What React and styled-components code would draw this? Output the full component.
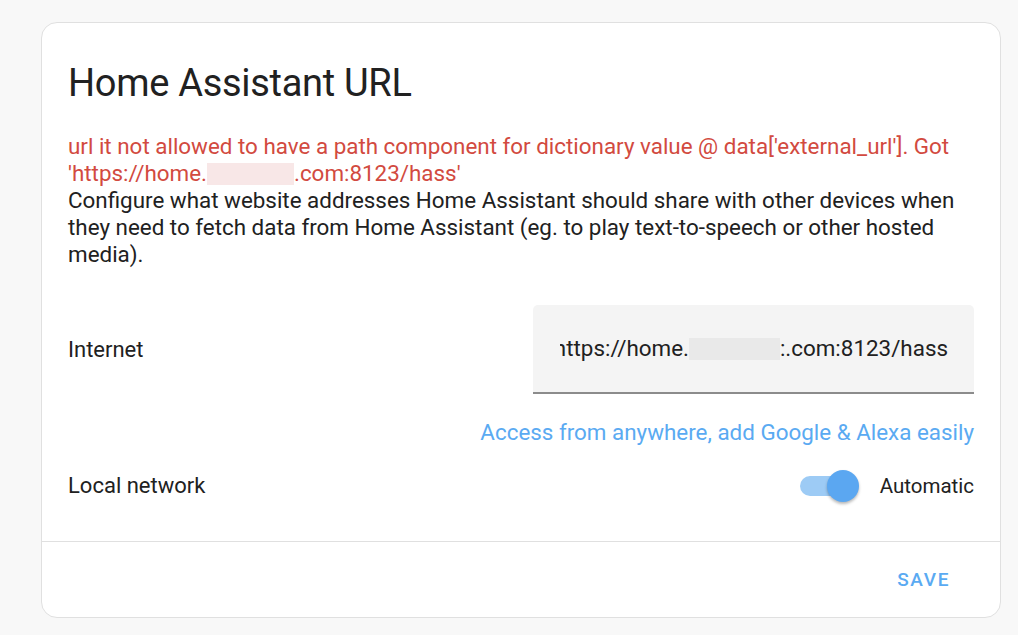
import React from "react";
import styled, { createGlobalStyle } from "styled-components";

const Global = createGlobalStyle`
  html, body { margin: 0; padding: 0; background: #f8f8f8; }
  body { font-family: Roboto, "Noto Sans", "Liberation Sans", sans-serif; -webkit-font-smoothing: antialiased; }
`;

const Page = styled.div`
  padding: 22px 17px 18px 41px;
`;

const Card = styled.section`
  width: 960px;
  background: #fff;
  border: 1px solid #e0e0e0;
  border-radius: 16px;
  box-sizing: border-box;
`;

const Title = styled.h1`
  margin: 0;
  padding: 36px 26px 0;
  font-size: 38px;
  font-weight: 400;
  line-height: 48px;
  color: #212121;
  letter-spacing: -0.3px;
`;

const Content = styled.div`
  padding: 26px 26px 0;
`;

const Text = styled.p`
  margin: 0;
  font-size: 22.4px;
  line-height: 27px;
  color: ${(p) => (p.$error ? "#d24a40" : "#212121")};
`;

const Redacted = styled.span`
  display: inline-block;
  width: ${(p) => p.$w}px;
  height: 22px;
  vertical-align: -4px;
  background: ${(p) => p.$bg};
`;

const Row = styled.div`
  display: flex;
  align-items: center;
  justify-content: space-between;
  margin-top: ${(p) => p.$mt}px;
`;

const Label = styled.span`
  font-size: 22px;
  color: #212121;
`;

const Field = styled.div`
  width: 441px;
  height: 89px;
  background: #f4f4f4;
  border-bottom: 2px solid #8c8c8c;
  border-radius: 5px 5px 0 0;
  padding: 0 26px 0 27px;
  box-sizing: border-box;
  display: flex;
  align-items: center;
`;

const FieldValue = styled.div`
  flex: 1;
  overflow: hidden;
  display: flex;
  justify-content: flex-end;
  white-space: nowrap;
  font-size: 22.4px;
  color: #212121;
  padding-bottom: 2px;
`;

const LinkRow = styled.div`
  display: flex;
  justify-content: flex-end;
  margin-top: 25px;
`;

const Link = styled.a`
  font-size: 22.4px;
  line-height: 27px;
  color: #5aaaf2;
  text-decoration: none;
`;

const SwitchWrap = styled.div`
  display: flex;
  align-items: center;
  gap: 21px;
`;

const Track = styled.span`
  position: relative;
  display: inline-block;
  width: 47px;
  height: 20px;
  border-radius: 10px;
  background: #9dcbf5;
  margin-right: 12px;
`;

const Knob = styled.span`
  position: absolute;
  top: -6px;
  right: -12px;
  width: 32px;
  height: 32px;
  border-radius: 50%;
  background: #5ba7f1;
  box-shadow: 0 2px 3px rgba(0, 0, 0, 0.28);
`;

const SwitchLabel = styled.span`
  font-size: 20.5px;
  color: #212121;
`;

const Divider = styled.hr`
  margin: 43px 0 0;
  border: 0;
  border-top: 1px solid #e0e0e0;
`;

const Actions = styled.div`
  display: flex;
  justify-content: flex-end;
  align-items: center;
  height: 75px;
  padding-right: 50px;
`;

const Button = styled.button`
  background: none;
  border: 0;
  padding: 0;
  font-family: inherit;
  font-size: 19px;
  font-weight: 500;
  letter-spacing: 1.6px;
  color: #5aaaf2;
  cursor: pointer;
`;

export default function App() {
  return (
    <>
      <Global />
      <Page>
        <Card>
          <Title>Home Assistant URL</Title>
          <Content>
            <Text $error>
              url it not allowed to have a path component for dictionary value @ data['external_url']. Got
              <br />
              'https://home.<Redacted $w={87} $bg="#f8e7e7" />.com:8123/hass'
            </Text>
            <Text>
              Configure what website addresses Home Assistant should share with other devices when they need to
              fetch data from Home Assistant (eg. to play text-to-speech or other hosted media).
            </Text>
            <Row $mt={37}>
              <Label>Internet</Label>
              <Field>
                <FieldValue>
                  <span>
                    https://home.<Redacted $w={91} $bg="#e9e9e9" />:.com:8123/hass
                  </span>
                </FieldValue>
              </Field>
            </Row>
            <LinkRow>
              <Link href="#">Access from anywhere, add Google &amp; Alexa easily</Link>
            </LinkRow>
            <Row $mt={27}>
              <Label>Local network</Label>
              <SwitchWrap>
                <Track>
                  <Knob />
                </Track>
                <SwitchLabel>Automatic</SwitchLabel>
              </SwitchWrap>
            </Row>
          </Content>
          <Divider />
          <Actions>
            <Button>SAVE</Button>
          </Actions>
        </Card>
      </Page>
    </>
  );
}
